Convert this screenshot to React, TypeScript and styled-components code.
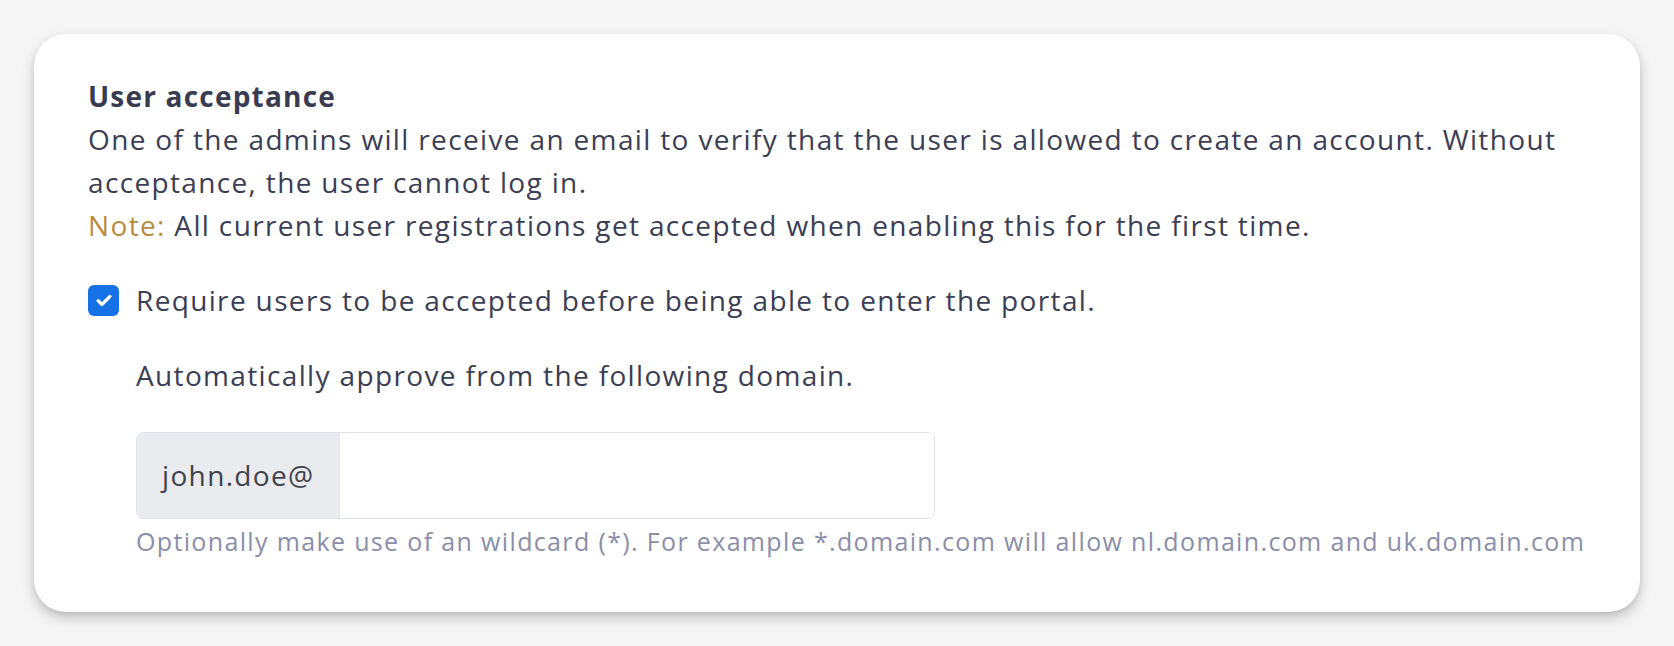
import React from "react";
import styled, { createGlobalStyle } from "styled-components";

const Global = createGlobalStyle`
  html, body {
    margin: 0;
    padding: 0;
    background: #f6f6f7;
  }
  body {
    font-family: "Open Sans", "Noto Sans", sans-serif;
  }
`;

const Page = styled.div`
  padding: 34px;
  width: 1674px;
  box-sizing: border-box;
`;

const Card = styled.section`
  box-sizing: border-box;
  width: 1606px;
  height: 578px;
  background: #ffffff;
  border-radius: 32px;
  box-shadow: 0 6px 14px rgba(0, 0, 0, 0.22), 0 2px 4px rgba(0, 0, 0, 0.06);
  padding: 41px 53px 0 54px;
  color: #3b3e54;
  font-size: 28px;
  line-height: 43px;
  letter-spacing: 1.35px;
`;

const Title = styled.h2`
  margin: 0;
  font-size: 28px;
  font-weight: 700;
  line-height: 43px;
  letter-spacing: 1.2px;
  color: #393b51;
`;

const Paragraph = styled.p`
  margin: 0;
`;

const NoteLabel = styled.span`
  color: #b98a3f;
`;

const CheckRow = styled.label`
  display: flex;
  align-items: center;
  gap: 17px;
  margin-top: 32px;
`;

const Box = styled.span`
  flex: none;
  width: 31px;
  height: 31px;
  border-radius: 6px;
  background: #1471e6;
  display: flex;
  align-items: center;
  justify-content: center;
`;

const Nested = styled.div`
  padding-left: 48px;
`;

const SubLabel = styled.p`
  margin: 32px 0 0;
`;

const InputGroup = styled.div`
  margin-top: 35px;
  width: 799px;
  height: 87px;
  box-sizing: border-box;
  border: 1.5px solid #e0e3e9;
  border-radius: 7px;
  display: flex;
  overflow: hidden;
`;

const Addon = styled.span`
  flex: none;
  width: 203px;
  box-sizing: border-box;
  background: #e9ebef;
  border-right: 1.5px solid #e0e3e9;
  display: flex;
  align-items: center;
  padding-left: 25px;
  color: #3f434b;
  font-size: 28px;
`;

const Field = styled.input`
  flex: 1;
  border: none;
  outline: none;
  background: #fff;
  font: inherit;
  padding: 0 20px;
`;

const Help = styled.p`
  margin: 4px 0 0;
  font-size: 25px;
  line-height: 36px;
  letter-spacing: 1.35px;
  color: #8a8ea9;
`;

export default function App() {
  return (
    <>
      <Global />
      <Page>
        <Card>
          <Title>User acceptance</Title>
          <Paragraph>
            One of the admins will receive an email to verify that the user is allowed to create an account. Without
            acceptance, the user cannot log in.
          </Paragraph>
          <Paragraph>
            <NoteLabel>Note:</NoteLabel> All current user registrations get accepted when enabling this for the first
            time.
          </Paragraph>
          <CheckRow>
            <Box>
              <svg width="16" height="13" viewBox="0 0 16 13" fill="none">
                <path d="M2.2 6.8 L6 10.4 L13.8 2.6" stroke="#fff" strokeWidth="3.4" strokeLinecap="round" strokeLinejoin="round" />
              </svg>
            </Box>
            <span>Require users to be accepted before being able to enter the portal.</span>
          </CheckRow>
          <Nested>
            <SubLabel>Automatically approve from the following domain.</SubLabel>
            <InputGroup>
              <Addon>john.doe@</Addon>
              <Field type="text" />
            </InputGroup>
            <Help>
              Optionally make use of an wildcard (*). For example *.domain.com will allow nl.domain.com and uk.domain.com
            </Help>
          </Nested>
        </Card>
      </Page>
    </>
  );
}
